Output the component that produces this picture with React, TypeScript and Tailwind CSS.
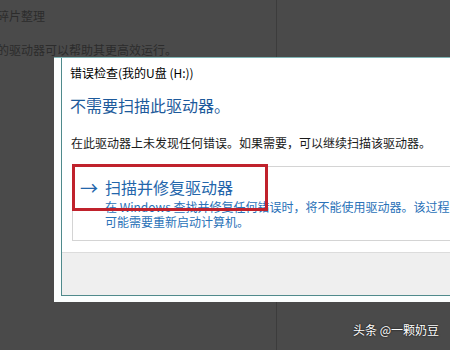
const font = { fontFamily: '"Noto Sans CJK SC", "Noto Sans", sans-serif' };

export default function App() {
  return (
    <div className="relative w-[450px] h-[350px] overflow-hidden bg-[#4a4a4a]" style={font}>
      {/* page behind the dialog */}
      <div className="flex">
        <div className="w-[277px] border-r border-[#3c3c3c] h-[350px] text-[12px] text-[#2c2c2c]">
          <div className="ml-[-3px] pt-[8px] leading-[16px]">碎片整理</div>
          <div className="ml-[-3px] mt-[18px] leading-[16px] whitespace-nowrap">的驱动器可以帮助其更高效运行。</div>
        </div>
      </div>

      {/* dialog window */}
      <div className="absolute left-[54px] top-[57px] w-[410px] h-[245px] bg-[#fbfefe] border-t border-[#7fb5b5]">
        <div className="ml-[7px] h-[238px] border border-[#4f8a8c] border-t-0 bg-white flex flex-col">
          <div className="pl-[8px] pt-[7px] text-[12px] leading-[16px] text-black">错误检查(我的U盘 (H:))</div>
          <div className="pl-[8px] mt-[14px] text-[16px] leading-[20px] text-[#1d5a9b]">不需要扫描此驱动器。</div>
          <div className="pl-[9px] mt-[20px] text-[12px] leading-[16px] text-[#1a1a1a] whitespace-nowrap">
            在此驱动器上未发现任何错误。如果需要，可以继续扫描该驱动器。
          </div>
          <div className="relative ml-[10px] mt-[15px] border-t border-l border-b border-[#d4d4d4] pt-[9px] pb-[11px]">
            <div className="flex items-center h-[22px] text-[#2366ab]">
              <span className="w-[32px] pl-[7px] text-[18px] leading-[22px]">→</span>
              <span className="text-[16px] leading-[22px]">扫描并修复驱动器</span>
            </div>
            <div className="pl-[32px] mt-[1px] text-[12px] leading-[15px] text-[#2a72b8] whitespace-nowrap">
              <div>在 Windows 查找并修复任何错误时，将不能使用驱动器。该过程</div>
              <div>可能需要重新启动计算机。</div>
            </div>
            <div className="absolute left-[-1px] top-[-3px] w-[196px] h-[47px] border-[3px] border-[#c0222c]" />
          </div>
          <div className="mt-[11px] flex-1 border-t border-[#dcdcdc] bg-[#efefef]" />
        </div>
      </div>

      {/* watermark */}
      <div className="absolute left-[353px] top-[321px] text-[12px] leading-[18px] text-white [text-shadow:0_0_2px_#000]">
        头条 @一颗奶豆
      </div>
    </div>
  );
}
